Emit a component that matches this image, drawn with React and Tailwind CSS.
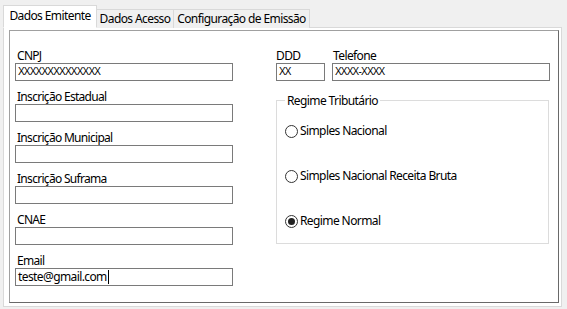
import React from "react";

const font = { fontFamily: '"Noto Sans", "Open Sans", sans-serif' };
const xfont = { fontFamily: '"Liberation Sans", sans-serif' };

function Field({ label, value, mono, caret }) {
  return (
    <div className="flex flex-col">
      <div className="h-[15px] leading-[15px] pl-[2px] text-[12px] tracking-[-0.7px] text-black whitespace-nowrap">{label}</div>
      <div className="w-[218px] h-[18px] border border-[#7a7a7a] bg-white flex items-center pl-[2px] overflow-hidden">
        {value && (
          <span
            className={
              mono
                ? "text-[10px] tracking-[-0.8px] text-black leading-none"
                : "text-[12px] tracking-[-0.6px] text-black leading-none"
            }
            style={mono ? xfont : undefined}
          >
            {value}
          </span>
        )}
        {caret && <span className="inline-block w-[1px] h-[14px] bg-black ml-[1px]" />}
      </div>
    </div>
  );
}

function Radio({ label, checked }) {
  return (
    <div className="flex items-center gap-[2px] h-[16px]">
      <span className="w-[13px] h-[13px] rounded-full border border-[#333] bg-white flex items-center justify-center">
        {checked && <span className="w-[7px] h-[7px] rounded-full bg-[#222]" />}
      </span>
      <span className="text-[12px] tracking-[-0.6px] text-black leading-none whitespace-nowrap">{label}</span>
    </div>
  );
}

export default function App() {
  return (
    <div className="w-[567px] h-[309px] bg-[#f0f0f0] pt-[5px] pl-[3px] pr-[5px] overflow-hidden" style={font}>
      <div className="flex items-end h-[23px] relative z-10 whitespace-nowrap">
        <div className="h-[23px] w-[94px] bg-white border border-[#d9d9d9] border-b-white flex items-center justify-center text-[12px] tracking-[-0.6px] text-black leading-none pb-[2px]">
          Dados Emitente
        </div>
        <div className="h-[19px] w-[77px] bg-[#f0f0f0] border border-[#d9d9d9] border-l-0 border-b-0 flex items-center justify-center text-[12px] tracking-[-0.6px] text-black leading-none">
          Dados Acesso
        </div>
        <div className="h-[19px] w-[136px] bg-[#f0f0f0] border border-[#d9d9d9] border-l-0 border-b-0 flex items-center justify-center text-[12px] tracking-[-0.6px] text-black leading-none">
          Configuração de Emissão
        </div>
      </div>
      <div className="-mt-[1px] h-[280px] border border-[#d9d9d9] bg-white pt-[2px] pl-[5px] pr-[2px] pb-[3px]">
        <div className="h-full border border-[#a0a0a0] border-r-[#696969] border-b-[#696969] flex pl-[5px] pt-[17px]">
          <div className="flex flex-col gap-[8px]">
            <Field label="CNPJ" value="XXXXXXXXXXXXXX" mono />
            <Field label="Inscrição Estadual" />
            <Field label="Inscrição Municipal" />
            <Field label="Inscrição Suframa" />
            <Field label="CNAE" />
            <Field label="Email" value="teste@gmail.com" caret />
          </div>
          <div className="ml-[43px] flex flex-col">
            <div className="flex gap-[7px]">
              <div className="flex flex-col">
                <div className="h-[15px] leading-[15px] text-[12px] tracking-[-0.6px] text-black">DDD</div>
                <div className="w-[49px] h-[18px] border border-[#7a7a7a] bg-white flex items-center pl-[2px]">
                  <span className="text-[10px] tracking-[-0.8px] leading-none" style={xfont}>XX</span>
                </div>
              </div>
              <div className="flex flex-col">
                <div className="h-[15px] leading-[15px] text-[12px] tracking-[-0.6px] text-black pl-[1px]">Telefone</div>
                <div className="w-[218px] h-[18px] border border-[#7a7a7a] bg-white flex items-center pl-[2px]">
                  <span className="text-[10px] tracking-[-0.8px] leading-none" style={xfont}>XXXX-XXXX</span>
                </div>
              </div>
            </div>
            <fieldset className="mt-[12px] w-[273px] h-[151px] border border-[#dcdcdc] pl-[8px] flex flex-col">
              <legend className="ml-0 px-[2px] text-[12px] tracking-[-0.6px] text-black leading-[15px]">Regime Tributário</legend>
              <div className="flex flex-col gap-[29px] pt-[15px]">
                <Radio label="Simples Nacional" />
                <Radio label="Simples Nacional Receita Bruta" />
                <Radio label="Regime Normal" checked />
              </div>
            </fieldset>
          </div>
        </div>
      </div>
    </div>
  );
}
